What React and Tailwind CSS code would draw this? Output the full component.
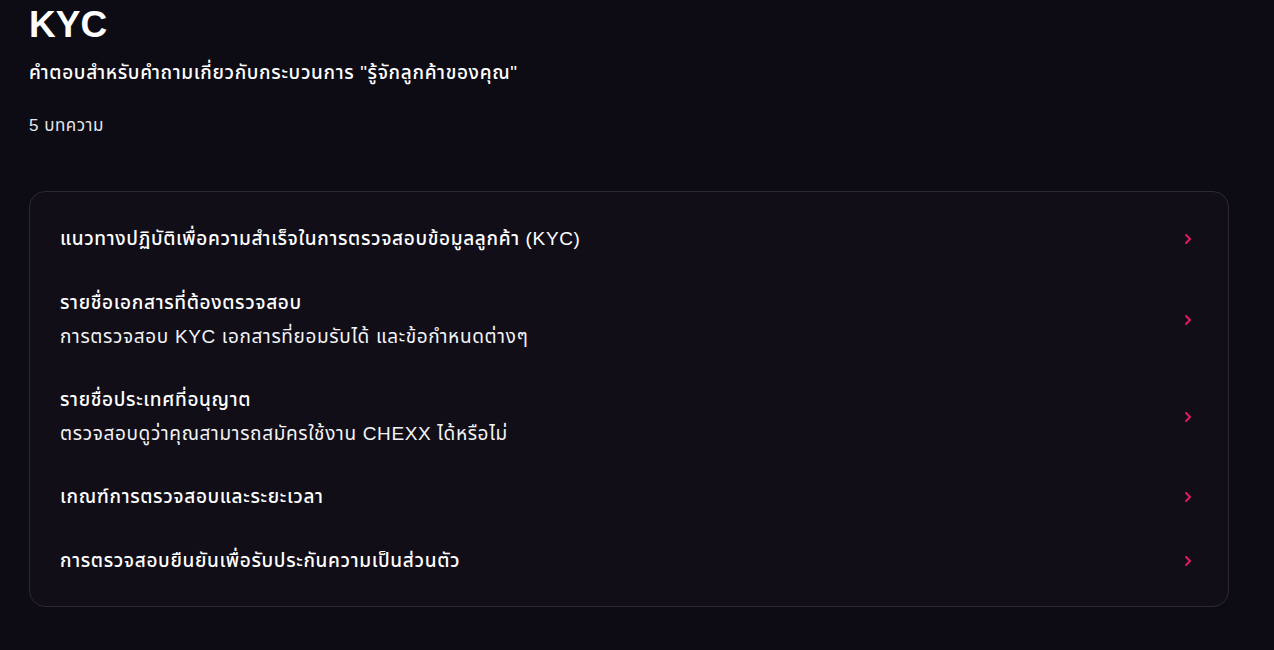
import { ChevronRight } from 'lucide-react';

const articles = [
  { title: 'แนวทางปฏิบัติเพื่อความสำเร็จในการตรวจสอบข้อมูลลูกค้า (KYC)' },
  { title: 'รายชื่อเอกสารที่ต้องตรวจสอบ', sub: 'การตรวจสอบ KYC เอกสารที่ยอมรับได้ และข้อกำหนดต่างๆ' },
  { title: 'รายชื่อประเทศที่อนุญาต', sub: 'ตรวจสอบดูว่าคุณสามารถสมัครใช้งาน CHEXX ได้หรือไม่' },
  { title: 'เกณฑ์การตรวจสอบและระยะเวลา' },
  { title: 'การตรวจสอบยืนยันเพื่อรับประกันความเป็นส่วนตัว' },
];

export default function App() {
  return (
    <div className="min-h-screen bg-[#0d0b14] text-white px-[29px] pt-[3px] font-['Liberation_Sans','Noto_Sans_Thai',sans-serif]">
      {/* Header */}
      <h1 className="text-[37px] font-bold leading-[44px]">KYC</h1>
      <p className="mt-[11px] text-[19px] font-medium leading-[30px] tracking-[0.65px]">
        คำตอบสำหรับคำถามเกี่ยวกับกระบวนการ "รู้จักลูกค้าของคุณ"
      </p>
      <p className="mt-[26px] text-[17px] leading-[24px] tracking-[0.5px] text-gray-200">5 บทความ</p>

      {/* Article list */}
      <div className="mt-[53px] mr-[16px] rounded-2xl border border-[#2c2935] bg-[#110e18] pt-[15px] pb-[13px]">
        {articles.map((a) => (
          <a key={a.title} href="#" className="flex items-center px-[30px] py-[17px]">
            <div className="flex-1 flex flex-col gap-[5px]">
              <span className="text-[19px] font-medium leading-[30px] tracking-[0.65px]">{a.title}</span>
              {a.sub && <span className="text-[19px] leading-[28px] tracking-[0.65px] text-gray-100">{a.sub}</span>}
            </div>
            <ChevronRight className="w-4 h-4 mr-[2px] text-[#e5195f]" strokeWidth={3} />
          </a>
        ))}
      </div>
    </div>
  );
}
